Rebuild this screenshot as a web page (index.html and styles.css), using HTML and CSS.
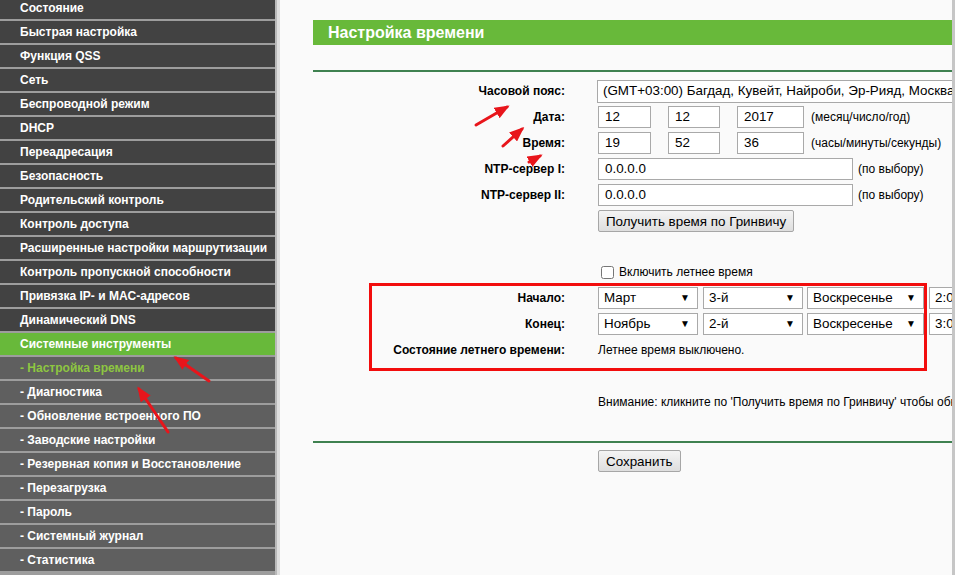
FILE: index.html
```html
<!DOCTYPE html>
<html lang="ru">
<head>
  <meta charset="UTF-8">
  <title>Настройка времени</title>
  <link rel="stylesheet" href="styles.css">
</head>
<body>
  <div class="page">
    <!-- левое меню -->
    <nav class="sidebar">
      <ul class="menu">
        <li>Состояние</li>
        <li>Быстрая настройка</li>
        <li>Функция QSS</li>
        <li>Сеть</li>
        <li>Беспроводной режим</li>
        <li>DHCP</li>
        <li>Переадресация</li>
        <li>Безопасность</li>
        <li>Родительский контроль</li>
        <li>Контроль доступа</li>
        <li>Расширенные настройки маршрутизации</li>
        <li>Контроль пропускной способности</li>
        <li>Привязка IP- и MAC-адресов</li>
        <li>Динамический DNS</li>
        <li class="active">Системные инструменты</li>
        <li class="sub current">- Настройка времени</li>
        <li class="sub">- Диагностика</li>
        <li class="sub">- Обновление встроенного ПО</li>
        <li class="sub">- Заводские настройки</li>
        <li class="sub">- Резервная копия и Восстановление</li>
        <li class="sub">- Перезагрузка</li>
        <li class="sub">- Пароль</li>
        <li class="sub">- Системный журнал</li>
        <li class="sub">- Статистика</li>
      </ul>
    </nav>

    <!-- основная часть -->
    <main class="main">
      <div class="title">Настройка времени</div>
      <div class="rule"></div>

      <div class="form">
        <div class="row">
          <span class="label">Часовой пояс:</span>
          <span class="select tz">(GMT+03:00) Багдад, Кувейт, Найроби, Эр-Рияд, Москва</span>
        </div>
        <div class="row">
          <span class="label">Дата:</span>
          <span class="input w53">12</span>
          <span class="input w52">12</span>
          <span class="input w67">2017</span>
          <span class="hint">(месяц/число/год)</span>
        </div>
        <div class="row">
          <span class="label">Время:</span>
          <span class="input w53">19</span>
          <span class="input w52">52</span>
          <span class="input w67">36</span>
          <span class="hint">(часы/минуты/секунды)</span>
        </div>
        <div class="row">
          <span class="label">NTP-сервер I:</span>
          <span class="input ntp">0.0.0.0</span>
          <span class="hint near">(по выбору)</span>
        </div>
        <div class="row">
          <span class="label">NTP-сервер II:</span>
          <span class="input ntp">0.0.0.0</span>
          <span class="hint near">(по выбору)</span>
        </div>
        <div class="row">
          <span class="label"></span>
          <button class="btn">Получить время по Гринвичу</button>
        </div>

        <div class="row gap">
          <span class="label"></span>
          <label class="check"><input type="checkbox"> Включить летнее время</label>
        </div>
        <div class="row">
          <span class="label">Начало:</span>
          <span class="select month">Март</span>
          <span class="select week">3-й</span>
          <span class="select day">Воскресенье</span>
          <span class="select hour">2:00</span>
        </div>
        <div class="row">
          <span class="label">Конец:</span>
          <span class="select month">Ноябрь</span>
          <span class="select week">2-й</span>
          <span class="select day">Воскресенье</span>
          <span class="select hour">3:00</span>
        </div>
        <div class="row">
          <span class="label">Состояние летнего времени:</span>
          <span class="text">Летнее время выключено.</span>
        </div>

        <div class="row note">
          <span class="label"></span>
          <span class="text">Внимание: кликните по 'Получить время по Гринвичу' чтобы обновить время.</span>
        </div>
      </div>

      <div class="rule bottom"></div>
      <div class="row save">
        <span class="label"></span>
        <button class="btn">Сохранить</button>
      </div>
    </main>
  </div>

  <!-- пометки поверх скриншота -->
  <div class="markBox"></div>
  <svg class="arrows" width="955" height="575" viewBox="0 0 955 575">
    <defs>
      <marker id="head" markerWidth="5" markerHeight="4" refX="4" refY="2" orient="auto" markerUnits="strokeWidth">
        <path d="M0,0 L5,2 L0,4 Z" fill="#e8151b"/>
      </marker>
    </defs>
    <g stroke="#e8151b" stroke-width="3" stroke-linecap="round" fill="none" marker-end="url(#head)">
      <line x1="476" y1="125" x2="507" y2="107"/>
      <line x1="503" y1="146" x2="522" y2="129"/>
      <line x1="529" y1="162" x2="540" y2="156"/>
      <line x1="209" y1="381" x2="176" y2="358"/>
      <line x1="168" y1="432" x2="139" y2="389"/>
    </g>
  </svg>
</body>
</html>
```

FILE: styles.css
```css
/* общие */
body {
  margin: 0;
  font-family: "Liberation Sans", Arial, sans-serif;
  font-size: 12px;
  color: #000;
  background: #fafafa;
  overflow: hidden;
}

.page {
  display: flex;
  width: 955px;
  height: 575px;
  overflow: hidden;
}

/* меню слева */
.sidebar {
  width: 275px;
  flex-shrink: 0;
  background: #9d9d9d;
  border-right: 2px solid #b9b9b9;
}

.menu {
  list-style: none;
  margin: -3px 0 0;
  padding: 0;
  display: flex;
  flex-direction: column;
  gap: 2px;
}

.menu li {
  height: 22px;
  line-height: 22px;
  padding-left: 20px;
  background: #424242;
  color: #fff;
  font-weight: bold;
  white-space: nowrap;
}

.menu li.active {
  background: #68b93a;
}

.menu li.sub {
  background: #5f5f5f;
}

.menu li.current {
  color: #8ec641;
}

/* правая часть */
.main {
  width: 639px;
  flex-shrink: 0;
  padding: 20px 0 0 33px;
  border-left: 3px solid #dedede;
  border-right: 3px solid #c6c6c6;
  overflow: hidden;
  background: #fafafa;
}

.title {
  height: 25px;
  line-height: 25px;
  padding-left: 15px;
  background: #68b93a;
  color: #fff;
  font-size: 16px;
  font-weight: bold;
}

.rule {
  height: 2px;
  margin-top: 25px;
  background: #3f8150;
}

.rule.bottom {
  margin-top: 26px;
}

.form {
  padding-top: 6px;
}

.row {
  display: flex;
  align-items: center;
  height: 26px;
  white-space: nowrap;
}

.row.gap {
  margin-top: 25px;
}

.row.note {
  margin-top: 26px;
}

.row.save {
  margin-top: 5px;
}

.label {
  width: 252px;
  padding-right: 33px;
  flex-shrink: 0;
  text-align: right;
  font-weight: bold;
}

/* поля */
.input,
.select {
  display: inline-block;
  box-sizing: border-box;
  height: 22px;
  line-height: 20px;
  padding-left: 6px;
  border: 1px solid #a9a9a9;
  background: #fff;
  font-size: 13.4px;
  flex-shrink: 0;
}

.input.w53 { width: 53px; }
.input.w52 { width: 52px; margin-left: 17px; }
.input.w67 { width: 67px; margin-left: 17px; }
.input.ntp { width: 255px; }

.select {
  position: relative;
  padding-left: 5px;
}

.select::after {
  content: "▼";
  position: absolute;
  right: 7px;
  top: 0;
  font-size: 10px;
}

.select.tz {
  width: 380px;
  height: 23px;
  margin-left: -1px;
}

.select.tz::after {
  content: none;
}

.select.month { width: 100px; }
.select.week { width: 100px; margin-left: 5px; }
.select.day { width: 117px; margin-left: 4px; }
.select.hour { width: 80px; margin-left: 5px; }

.hint {
  margin-left: 7px;
  color: #000;
}

.hint.near {
  margin-left: 5px;
}

.text {
  font-size: 12px;
}

.btn {
  height: 22px;
  padding: 0 7px;
  font-family: "Liberation Sans", Arial, sans-serif;
  font-size: 13.4px;
  color: #000;
  border: 1px solid #a6a6a6;
  border-radius: 2px;
  background: linear-gradient(#f4f4f4, #dedede);
}

.check {
  display: flex;
  align-items: center;
  gap: 5px;
}

.check input {
  margin: 0 0 0 3px;
  width: 13px;
  height: 13px;
}

/* красная рамка и стрелки */
.markBox {
  position: absolute;
  left: 369px;
  top: 283px;
  width: 552px;
  height: 82px;
  border: 3px solid #f20d0d;
}

.arrows {
  position: absolute;
  left: 0;
  top: 0;
  pointer-events: none;
}
```
